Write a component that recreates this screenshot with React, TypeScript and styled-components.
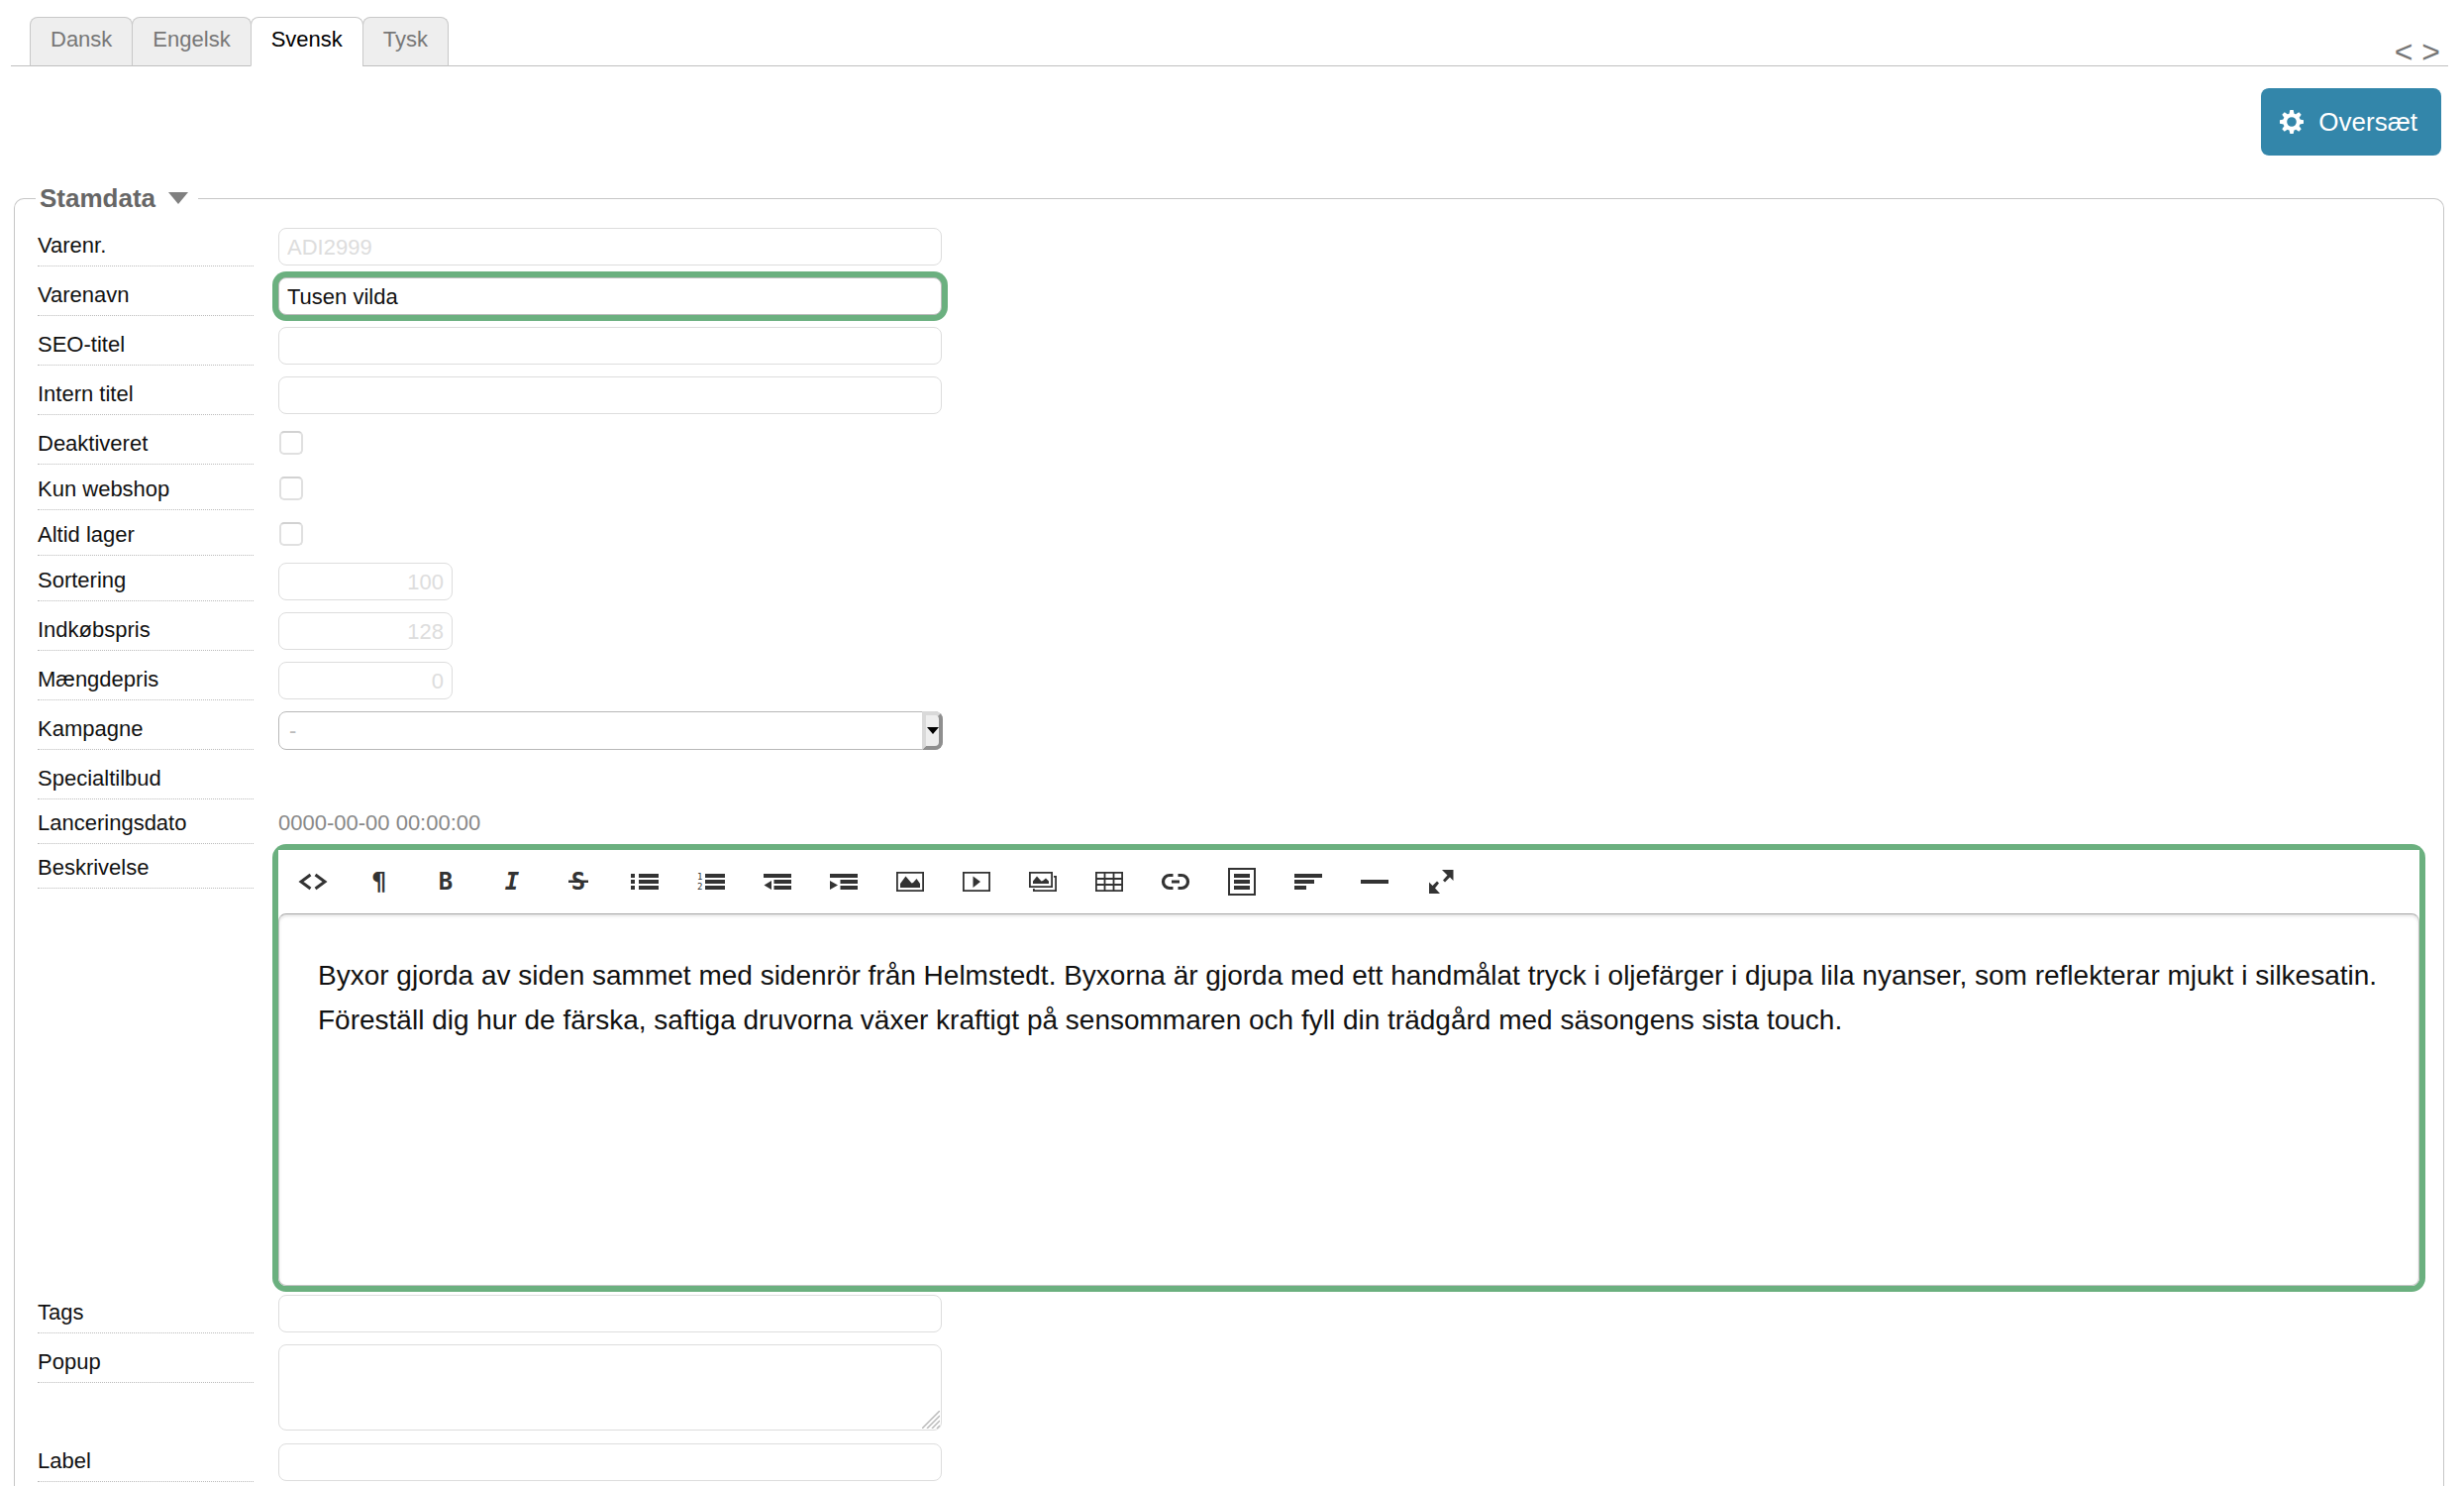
import React from "react";
import styled, { createGlobalStyle, css } from "styled-components";

const sans = `"Liberation Sans", Arial, Helvetica, sans-serif`;
const green = "#6bb07f";

const GlobalStyle = createGlobalStyle`
  *, *::before, *::after { box-sizing: border-box; }
  body { margin: 0; background: #fff; font-family: ${sans}; color: #111; }
  button, input, select, textarea { font-family: inherit; }
`;

const Page = styled.main`
  min-height: 100vh;
  display: flex;
  flex-direction: column;
  padding: 0 16px 0 11px;
`;

const TabBar = styled.header`
  display: flex;
  justify-content: space-between;
  align-items: flex-end;
  padding: 17px 8px 0 20px;
  border-bottom: 1px solid #bfbfbf;
`;

const Tabs = styled.nav`
  display: flex;
  margin-bottom: -1px;
`;

const Tab = styled.button<{ $active?: boolean }>`
  height: 50px;
  padding: 0 20px 4px;
  margin-left: -1px;
  border: 1px solid #c8c8c8;
  border-bottom-color: ${(p) => (p.$active ? "#fff" : "#bfbfbf")};
  border-radius: 8px 8px 0 0;
  background: ${(p) => (p.$active ? "#fff" : "#eee")};
  color: ${(p) => (p.$active ? "#000" : "#777")};
  font-size: 22px;
  line-height: 24px;
  cursor: pointer;
`;

const Pager = styled.nav`
  display: flex;
  gap: 9px;
`;

const PagerLink = styled.a`
  color: #777;
  font-size: 32px;
  line-height: 28px;
  text-decoration: none;
`;

const Actions = styled.div`
  display: flex;
  justify-content: flex-end;
  padding: 22px 7px 0;
`;

const TranslateButton = styled.button`
  display: flex;
  align-items: center;
  gap: 15px;
  height: 68px;
  padding: 0 24px 0 19px;
  border: 0;
  border-radius: 8px;
  background: #3386aa;
  color: #fff;
  font-size: 26px;
  line-height: 30px;
  cursor: pointer;
`;

const Section = styled.fieldset`
  flex: 1 0 auto;
  min-width: 0;
  margin: 29px 4px 0 3px;
  padding: 16px 24px 0 23px;
  border: 1px solid #c6c6c6;
  border-bottom: 0;
  border-radius: 10px 10px 0 0;
`;

const SectionTitle = styled.legend`
  display: flex;
  align-items: center;
  gap: 13px;
  margin-left: -2px;
  padding: 0 10px 0 4px;
  color: #666;
  font-size: 26px;
  font-weight: bold;
  line-height: 28px;
`;

const Row = styled.div<{ $height?: number }>`
  display: flex;
  align-items: flex-start;
  gap: 25px;
  min-height: ${(p) => p.$height ?? 50}px;

  &:last-child { min-height: 0; }
`;

const labelStyle = css`
  flex: none;
  width: 218px;
  height: 39px;
  padding-top: 5px;
  border-bottom: 1px dotted #bbb;
  color: #111;
  font-size: 22px;
  line-height: 25px;
`;

const Label = styled.label`${labelStyle}`;
const Caption = styled.span`${labelStyle}`;

const fieldStyle = css`
  display: block;
  margin: 0;
  border: 1px solid #ddd;
  border-radius: 8px;
  background: #fff;
  color: #111;
  font-size: 22px;
  line-height: 26px;
  outline: none;
`;

const TextInput = styled.input<{ $short?: boolean; $changed?: boolean }>`
  ${fieldStyle}
  width: ${(p) => (p.$short ? 176 : 670)}px;
  height: 38px;
  padding: 2px 8px 0;
  text-align: ${(p) => (p.$short ? "right" : "left")};

  &:disabled { color: #ddd; }

  ${(p) =>
    p.$changed &&
    css`
      border-color: #bbb;
      box-shadow: 0 0 0 6px ${green};
    `}
`;

const Checkbox = styled.input`
  appearance: none;
  width: 24px;
  height: 24px;
  margin: 5px 1px;
  border: 2px solid #e0e0e0;
  border-top-color: #d2d2d2;
  border-radius: 5px;
  background: #fff;

  &:checked { background: ${green}; }
`;

const SelectBox = styled.div`
  position: relative;
  width: 671px;
`;

const Select = styled.select`
  ${fieldStyle}
  appearance: none;
  width: 100%;
  height: 39px;
  padding: 0 30px 0 10px;
  border-color: #b8b8b8;
  color: #bbb;
`;

const SelectArrow = styled.span`
  position: absolute;
  top: 0;
  right: 0;
  bottom: 0;
  display: flex;
  align-items: center;
  justify-content: center;
  width: 21px;
  border: 4px solid;
  border-color: #d9d9d9 #8f8f8f #8f8f8f #d9d9d9;
  border-radius: 0 8px 8px 0;
  background: #eee;
  pointer-events: none;
`;

const DateText = styled.span`
  padding-top: 5px;
  color: #888;
  font-size: 22px;
  line-height: 25px;
`;

const AreaBox = styled.div`
  position: relative;
  width: 670px;
`;

const TextArea = styled.textarea`
  ${fieldStyle}
  width: 100%;
  height: 87px;
  padding: 4px 8px;
  resize: none;
`;

const Grip = styled.svg`
  position: absolute;
  right: 2px;
  bottom: 2px;
`;

const Editor = styled.div`
  flex: 1;
  min-width: 0;
  border-radius: 8px;
  box-shadow: 0 0 0 6px ${green};
`;

const Toolbar = styled.div`
  display: flex;
  height: 64px;
  padding: 0 1px;
  background: #fff;
`;

const Tool = styled.button`
  display: flex;
  align-items: center;
  justify-content: center;
  width: 67px;
  padding: 0;
  border: 0;
  background: none;
  color: #333;
  cursor: pointer;

  svg { display: block; overflow: visible; }
  text { font-family: "DejaVu Sans Mono", monospace; }
`;

const EditorText = styled.textarea`
  display: block;
  width: 100%;
  height: 376px;
  padding: 39px 36px 39px 39px;
  border: 1px solid #c4c4c4;
  border-top-color: #a8a8a8;
  border-radius: 8px;
  background: #fff;
  box-shadow: inset 0 2px 3px #e4e4e4;
  color: #111;
  font-size: 28px;
  line-height: 45px;
  outline: none;
  resize: none;
`;

const lines = <path d="M8 6h20v4H8zM8 12h20v4H8zM8 18h20v4H8z" />;

const glyph = (ch: string, italic = false) => (
  <text x="14" y="22" textAnchor="middle" fontSize="24" fontWeight="bold" fontStyle={italic ? "italic" : "normal"}>
    {ch}
  </text>
);

const tools: { name: string; icon: React.ReactNode }[] = [
  {
    name: "HTML",
    icon: <path d="M11.5 7 2 14l9.500 7M16.500 7 26 14l-9.500 7" fill="none" stroke="currentColor" strokeWidth="3" />,
  },
  { name: "Format", icon: glyph("¶") },
  { name: "Fed", icon: glyph("B") },
  { name: "Kursiv", icon: glyph("I", true) },
  {
    name: "Gennemstreget",
    icon: (
      <>
        {glyph("S")}
        <path d="M4 12.500h20v2.500H4z" />
      </>
    ),
  },
  {
    name: "Punktliste",
    icon: (
      <>
        <path d="M0 6h4v4H0zM0 12h4v4H0zM0 18h4v4H0z" />
        {lines}
      </>
    ),
  },
  {
    name: "Nummereret liste",
    icon: (
      <>
        <text x="0" y="12" fontSize="9">1</text>
        <text x="0" y="22" fontSize="9">2</text>
        {lines}
      </>
    ),
  },
  {
    name: "Ryk ud",
    icon: <path d="M0 6h28v4H0zM10.500 12H28v4H10.500zM10.500 18H28v4H10.500zM.5 17.500 8 13v9z" />,
  },
  {
    name: "Ryk ind",
    icon: <path d="M0 6h28v4H0zM10.500 12H28v4H10.500zM10.500 18H28v4H10.500zM8 17.500 0 13v9z" />,
  },
  {
    name: "Billede",
    icon: (
      <>
        <path d="M.9 4.900h26.200v18.200H.9z" fill="none" stroke="currentColor" strokeWidth="1.800" />
        <path d="M4 20v-4l5.500-7.500 6 7 1.500-.5 3.500-4L24 16v4z" />
      </>
    ),
  },
  {
    name: "Video",
    icon: (
      <>
        <path d="M.9 4.900h26.200v18.200H.9z" fill="none" stroke="currentColor" strokeWidth="1.800" />
        <path d="M10.500 8.500 18 14l-7.500 6z" />
      </>
    ),
  },
  {
    name: "Galleri",
    icon: (
      <>
        <path d="M.9 4.900h22.200v14.200H.9zM25 8.900h2.100v14.200H4.900V21" fill="none" stroke="currentColor" strokeWidth="1.800" />
        <path d="M4 16v-2.500l4-5 4.500 5 1.500-.5 3-2.500 3 3V16z" />
      </>
    ),
  },
  {
    name: "Tabel",
    icon: (
      <path
        d="M.9 4.900h26.200v18.200H.9zM9.500 5v18M18.500 5v18M1 11h26M1 17h26"
        fill="none"
        stroke="currentColor"
        strokeWidth="1.800"
      />
    ),
  },
  {
    name: "Link",
    icon: (
      <path
        d="M11.500 7.500H8a6.500 6.500 0 0 0 0 13h3.500M16.500 7.500H20a6.500 6.500 0 0 1 0 13h-3.500M10 14h8"
        fill="none"
        stroke="currentColor"
        strokeWidth="3.200"
      />
    ),
  },
  {
    name: "Widget",
    icon: (
      <>
        <path d="M1 1h26v26H1z" fill="none" stroke="currentColor" strokeWidth="2" />
        <path d="M6 6h16v4H6zM6 12h16v4H6zM6 18h16v4H6z" />
      </>
    ),
  },
  { name: "Justering", icon: <path d="M0 6h28v4H0zM0 12h20v4H0zM0 18h12v4H0z" /> },
  { name: "Linje", icon: <path d="M0 12h28v4H0z" /> },
  {
    name: "Fuld skærm",
    icon: (
      <path d="M15 2h11.500v11l-3.500-3.500-5 5-2-2 4.500-5zM2 26V14.500l3.500 3.500 4.500-4.500 2 2L8 20.500l5 5.500z" />
    ),
  },
];

const gearTeeth = [0, 45, 90, 135, 180, 225, 270, 315];

const Gear = () => (
  <svg width="24" height="24" viewBox="0 0 24 24" aria-hidden="true">
    <circle cx="12" cy="12" r="6.800" fill="none" stroke="#fff" strokeWidth="4" />
    {gearTeeth.map((angle) => (
      <path key={angle} d="M10.300 0h3.400l.8 4h-5z" fill="#fff" transform={`rotate(${angle} 12 12)`} />
    ))}
  </svg>
);

const description =
  "Byxor gjorda av siden sammet med sidenrör från Helmstedt. Byxorna är gjorda med ett handmålat tryck i oljefärger i djupa lila nyanser, som reflekterar mjukt i silkesatin. Föreställ dig hur de färska, saftiga druvorna växer kraftigt på sensommaren och fyll din trädgård med säsongens sista touch.";

type FieldProps = {
  id: string;
  label: string;
  value?: string;
  short?: boolean;
  changed?: boolean;
  disabled?: boolean;
};

const TextRow = ({ id, label, value = "", short, changed, disabled }: FieldProps) => (
  <Row>
    <Label htmlFor={id}>{label}</Label>
    <TextInput id={id} defaultValue={value} $short={short} $changed={changed} disabled={disabled} />
  </Row>
);

const CheckRow = ({ id, label }: FieldProps) => (
  <Row $height={46}>
    <Label htmlFor={id}>{label}</Label>
    <Checkbox id={id} type="checkbox" />
  </Row>
);

const languages = ["Dansk", "Engelsk", "Svensk", "Tysk"];

export default function App() {
  const [language, setLanguage] = React.useState("Svensk");

  return (
    <>
      <GlobalStyle />
      <Page>
        <TabBar>
          <Tabs>
            {languages.map((name) => (
              <Tab key={name} type="button" $active={name === language} onClick={() => setLanguage(name)}>
                {name}
              </Tab>
            ))}
          </Tabs>
          <Pager>
            <PagerLink href="#prev">&lt;</PagerLink>
            <PagerLink href="#next">&gt;</PagerLink>
          </Pager>
        </TabBar>

        <Actions>
          <TranslateButton type="button">
            <Gear />
            Oversæt
          </TranslateButton>
        </Actions>

        <Section>
          <SectionTitle>
            Stamdata
            <svg width="20" height="12" viewBox="0 0 20 12" aria-hidden="true">
              <path d="M0 0h20L10 12z" fill="#808080" />
            </svg>
          </SectionTitle>

          <TextRow id="sku" label="Varenr." value="ADI2999" disabled />
          <TextRow id="name" label="Varenavn" value="Tusen vilda" changed />
          <TextRow id="seo" label="SEO-titel" />
          <TextRow id="internal" label="Intern titel" />
          <CheckRow id="inactive" label="Deaktiveret" />
          <CheckRow id="webshop" label="Kun webshop" />
          <CheckRow id="stock" label="Altid lager" />
          <TextRow id="sorting" label="Sortering" value="100" short disabled />
          <TextRow id="cost" label="Indkøbspris" value="128" short disabled />
          <TextRow id="bulk" label="Mængdepris" value="0" short disabled />
          <Row>
            <Label htmlFor="campaign">Kampagne</Label>
            <SelectBox>
              <Select id="campaign" defaultValue="-">
                <option>-</option>
              </Select>
              <SelectArrow>
                <svg width="12" height="7" viewBox="0 0 12 7" aria-hidden="true">
                  <path d="M0 0h12L6 7z" />
                </svg>
              </SelectArrow>
            </SelectBox>
          </Row>
          <Row $height={45}>
            <Caption>Specialtilbud</Caption>
          </Row>
          <Row $height={45}>
            <Caption>Lanceringsdato</Caption>
            <DateText>0000-00-00 00:00:00</DateText>
          </Row>
          <Row $height={449}>
            <Label htmlFor="description">Beskrivelse</Label>
            <Editor>
              <Toolbar>
                {tools.map((tool) => (
                  <Tool key={tool.name} type="button" aria-label={tool.name}>
                    <svg width="28" height="28" viewBox="0 0 28 28" fill="currentColor" aria-hidden="true">
                      {tool.icon}
                    </svg>
                  </Tool>
                ))}
              </Toolbar>
              <EditorText id="description" defaultValue={description} spellCheck={false} />
            </Editor>
          </Row>
          <TextRow id="tags" label="Tags" />
          <Row $height={100}>
            <Label htmlFor="popup">Popup</Label>
            <AreaBox>
              <TextArea id="popup" />
              <Grip width="18" height="18" viewBox="0 0 18 18" aria-hidden="true">
                <path d="M0 18 18 0M5 18 18 5M10 18l8-8M15 18l3-3" stroke="#bbb" strokeWidth="1.500" />
              </Grip>
            </AreaBox>
          </Row>
          <TextRow id="label" label="Label" />
        </Section>
      </Page>
    </>
  );
}
